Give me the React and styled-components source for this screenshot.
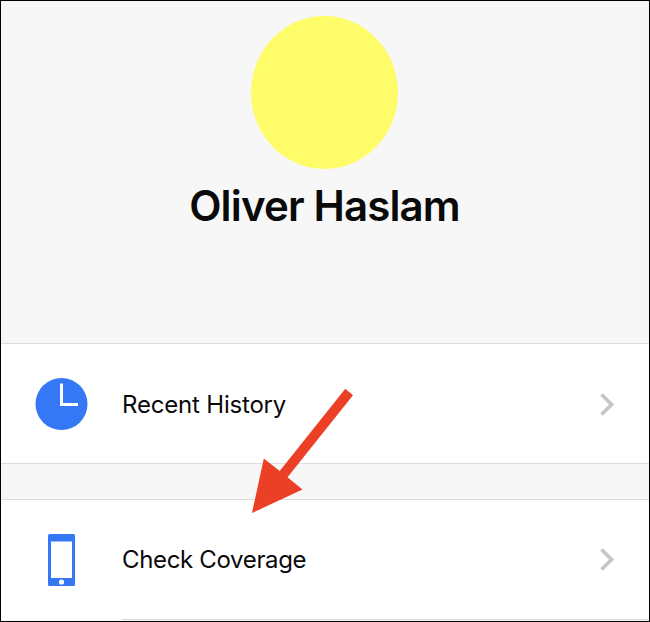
import React from "react";
import styled, { createGlobalStyle } from "styled-components";

const GlobalStyle = createGlobalStyle`
  * { box-sizing: border-box; }
  body { margin: 0; }
`;

const Screen = styled.main`
  position: relative;
  width: 650px;
  height: 622px;
  overflow: hidden;
  border: 1px solid #000;
  background: #f7f7f7;
  color: #0a0a0a;
  font-family: Inter, "Liberation Sans", sans-serif;
`;

const Profile = styled.header`
  display: flex;
  flex-direction: column;
  align-items: center;
  height: 342px;
  padding: 15px 2px 0 0;
`;

const Avatar = styled.div`
  flex: none;
  width: 147px;
  height: 153px;
  border-radius: 50%;
  background: #fffc69;
`;

const Name = styled.h1`
  margin: 12px 0 0 1px;
  font-size: 42px;
  line-height: 50px;
  font-weight: 600;
  letter-spacing: ${(p) => p.$tracking};
  white-space: nowrap;
`;

const Group = styled.section`
  height: 121px;
  border-top: 1px solid #dcdcde;
  border-bottom: ${(p) => (p.$inset ? "0" : "1px solid #dcdcde")};
  margin-bottom: 35px;
  background: #fff;
`;

const Row = styled.div`
  display: flex;
  align-items: center;
  height: 119px;
  padding: ${(p) => (p.$lowered ? "2px" : "0")} 35px 0 34px;
`;

const IconSlot = styled.span`
  display: flex;
  flex: none;
  justify-content: center;
  width: 53px;
  margin-right: 34px;
`;

const Label = styled.span`
  flex: 1;
  font-size: 24px;
  line-height: 30px;
  letter-spacing: ${(p) => p.$tracking};
  white-space: nowrap;
`;

const Divider = styled.div`
  height: 1px;
  margin-left: 121px;
  background: #dcdcde;
`;

const Pointer = styled.svg`
  position: absolute;
  left: 248px;
  top: 385px;
`;

const ClockIcon = () => (
  <svg width="53" height="53" viewBox="0 0 53 53">
    <circle cx="26.5" cy="26" r="26" fill="#3478f6" />
    <path d="M26.5 5.5V26.5H43" fill="none" stroke="#fff" strokeWidth="3" />
  </svg>
);

const PhoneIcon = () => (
  <svg width="27" height="52" viewBox="0 0 27 52">
    <rect width="27" height="52" rx="1.5" fill="#3478f6" />
    <rect x="3" y="7.5" width="21" height="36.5" fill="#fff" />
    <circle cx="13.5" cy="48" r="2.6" fill="#fff" />
  </svg>
);

const Chevron = () => (
  <svg width="14" height="23" viewBox="0 0 14 23">
    <path d="M1.5 1.5L11.6 11.5L1.5 21.5" fill="none" stroke="#c6c6ca" strokeWidth="3.6" />
  </svg>
);

export default function App() {
  return (
    <>
      <GlobalStyle />
      <Screen>
        <Profile>
          <Avatar />
          <Name $tracking="-0.85px">Oliver Haslam</Name>
        </Profile>
        <Group>
          <Row $lowered>
            <IconSlot><ClockIcon /></IconSlot>
            <Label $tracking="-0.19px">Recent History</Label>
            <Chevron />
          </Row>
        </Group>
        <Group $inset>
          <Row>
            <IconSlot><PhoneIcon /></IconSlot>
            <Label $tracking="-0.34px">Check Coverage</Label>
            <Chevron />
          </Row>
          <Divider />
        </Group>
        <Pointer width="106" height="130" viewBox="249 386 106 130">
          <path d="M345.3 388.8L353 395.2L287.5 477.2L302.5 489.5L252 513L263.8 458.5L279.7 470.9Z" fill="#eb4025" />
        </Pointer>
      </Screen>
    </>
  );
}
